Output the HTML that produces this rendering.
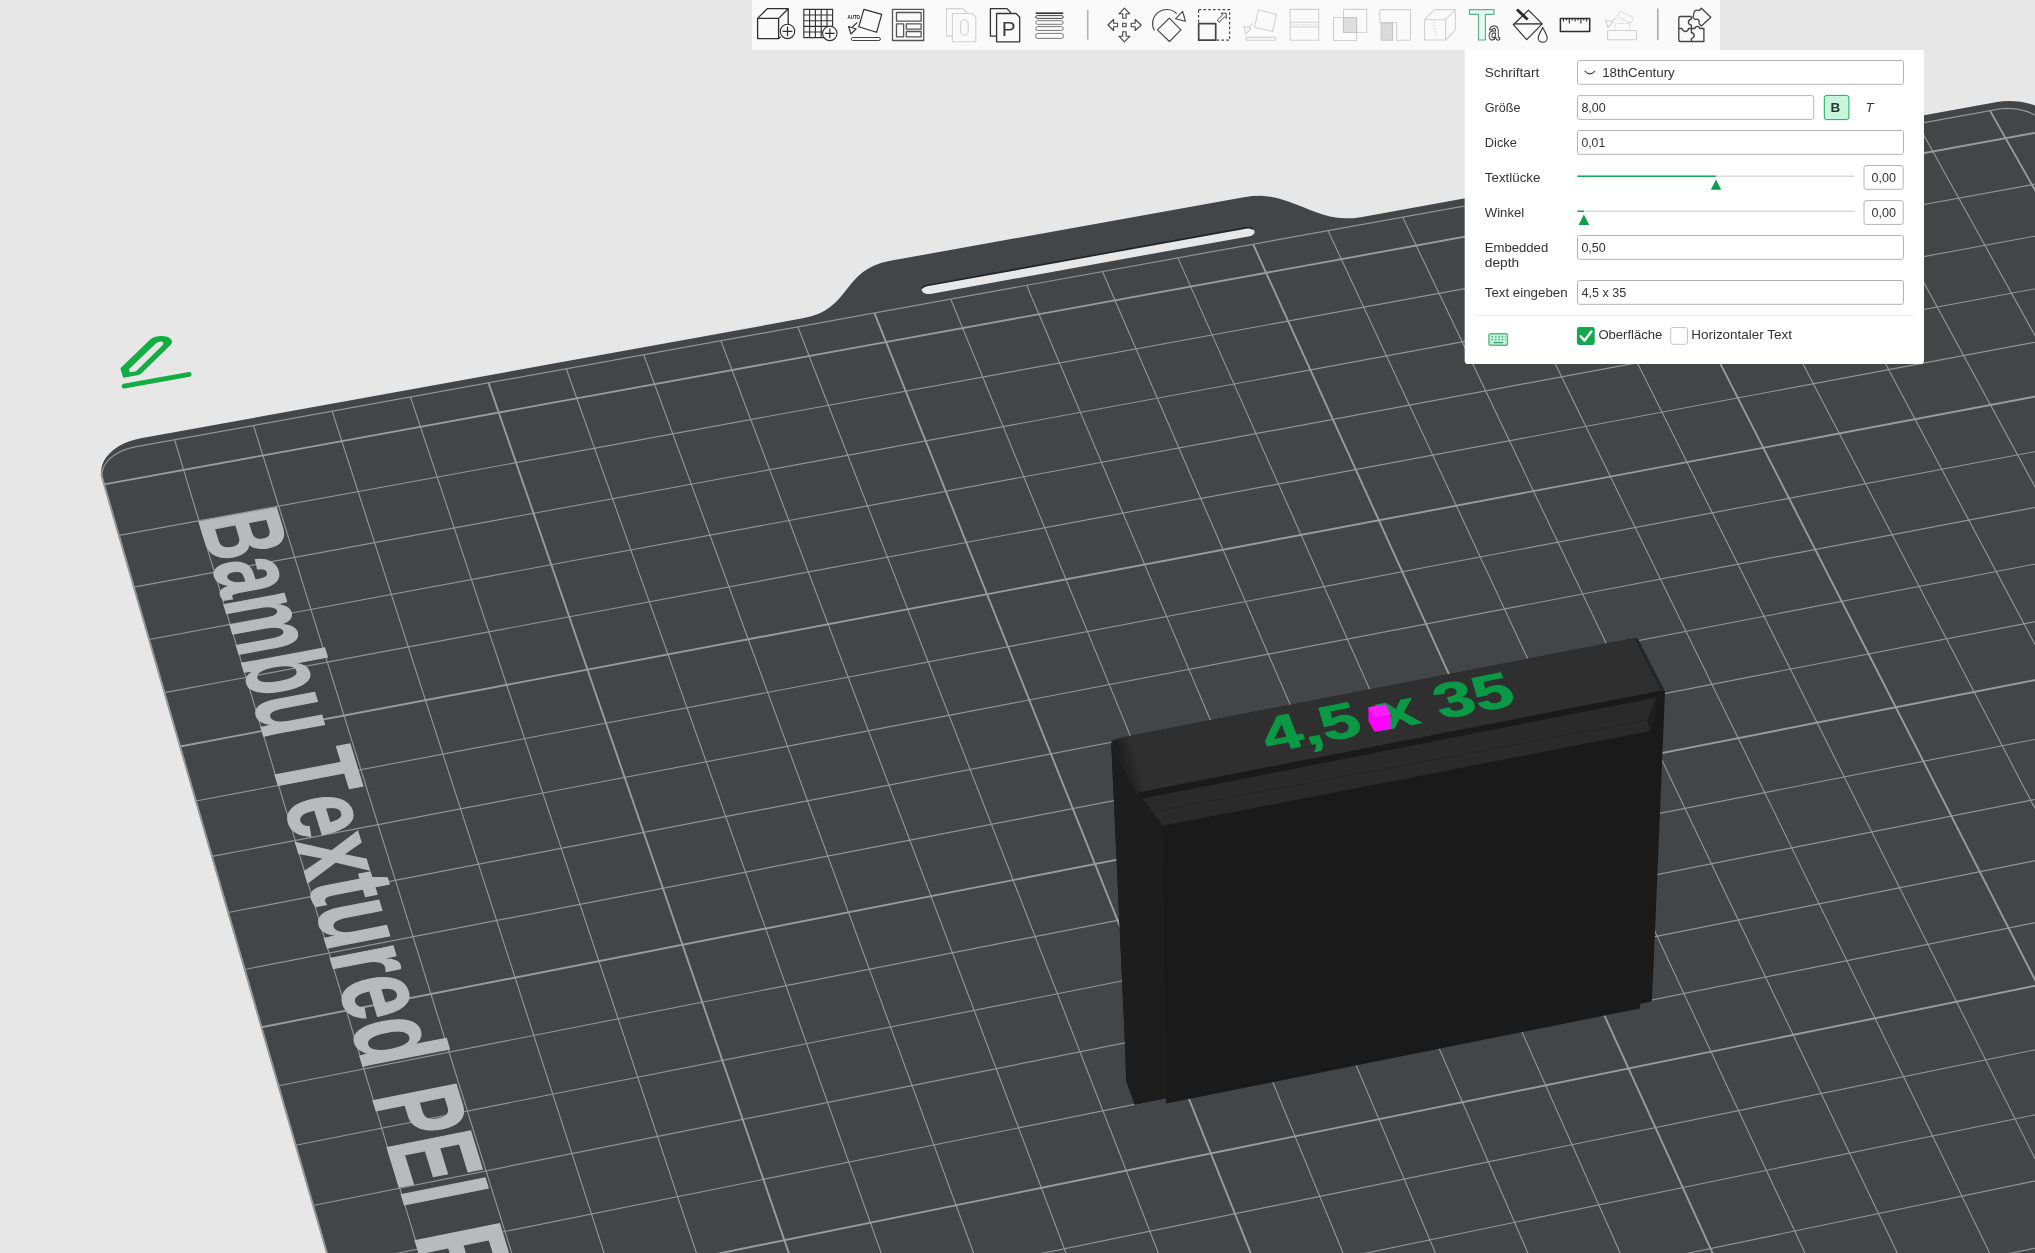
<!DOCTYPE html>
<html><head><meta charset="utf-8"><title>Bambu Studio</title>
<style>html,body{margin:0;padding:0;background:#e7e7e7;overflow:hidden}body{width:2035px;height:1253px;position:relative}svg{position:absolute;left:0;top:0;display:block;will-change:transform}text{white-space:pre}</style>
</head><body>
<svg width="2035" height="1253" viewBox="0 0 2035 1253">
<rect width="2035" height="1253" fill="#e7e7e7"/>
<path d="M102 477.09 L101.26 473.05 L101.35 468.95 L102.27 464.83 L103.99 460.79 L106.5 456.88 L109.74 453.17 L113.66 449.72 L118.2 446.59 L123.26 443.84 L128.78 441.51 L134.64 439.64 L140.77 438.26 L802.71 318.37 L811.35 316.33 L818.74 313.66 L825.05 310.45 L830.44 306.79 L835.12 302.77 L839.25 298.49 L843.02 294.03 L846.6 289.48 L850.18 284.94 L853.94 280.5 L858.05 276.24 L862.69 272.26 L868.04 268.63 L874.29 265.46 L881.6 262.83 L890.16 260.82 L1243.76 197.13 L1252.54 196.01 L1260.76 195.84 L1268.5 196.47 L1275.84 197.78 L1282.87 199.63 L1289.66 201.89 L1296.3 204.41 L1302.87 207.08 L1309.44 209.74 L1316.09 212.28 L1322.91 214.54 L1329.96 216.4 L1337.34 217.71 L1345.11 218.35 L1353.35 218.17 L1362.14 217.05 L1997.08 102.05 L2002.87 101.26 L2008.83 100.95 L2014.85 101.13 L2020.84 101.8 L2026.69 102.93 L2032.3 104.53 L2037.59 106.55 L2042.45 108.96 L2046.8 111.73 L2050.58 114.81 L2053.72 118.14 L2056.15 121.67 L2828.63 1467.16 L2831.11 1472.32 L2832.68 1477.59 L2833.32 1482.87 L2833.01 1488.09 L2831.76 1493.14 L2829.59 1497.94 L2826.53 1502.41 L2822.64 1506.47 L2817.98 1510.05 L2812.63 1513.08 L2806.69 1515.52 L2800.25 1517.32 L604.66 2002.56 L597.15 2003.82 L589.55 2004.31 L581.98 2004.02 L574.58 2002.96 L567.48 2001.14 L560.8 1998.6 L554.66 1995.38 L549.16 1991.54 L544.39 1987.15 L540.45 1982.27 L537.38 1977.01 L535.25 1971.44Z" fill="#444547"/>
<path d="M930.38 293.95 L928.6 294.12 L926.82 293.99 L925.16 293.57 L923.75 292.89 L922.67 292 L922 290.95 L921.78 289.82 L922.03 288.68 L922.73 287.62 L923.84 286.7 L925.27 285.99 L926.94 285.54 L1245.85 227.86 L1247.61 227.69 L1249.37 227.82 L1251.03 228.23 L1252.46 228.9 L1253.58 229.78 L1254.29 230.81 L1254.55 231.92 L1254.35 233.04 L1253.7 234.09 L1252.65 234.99 L1251.25 235.69 L1249.62 236.14Z" fill="#e7e7e7"/>
<path d="M922.79 287.64 L922.73 287.62 L923.53 286.91 L924.52 286.32 L925.67 285.85 L926.94 285.54 L1245.85 227.86 L1247.61 227.69 L1249.37 227.82 L1251.03 228.23 L1252.46 228.9" fill="none" stroke="#232324" stroke-width="1.6" stroke-linecap="round"/>
<path d="M174.58 439.78L639.12 1983.31 M253.51 425.47L733.08 1962.57 M332.14 411.22L826.61 1941.93 M410.48 397.02L919.72 1921.38 M566.27 368.77L1104.68 1880.55 M643.73 354.73L1196.54 1860.28 M720.9 340.74L1287.98 1840.09 M797.78 326.8L1379.01 1820 M950.68 299.08L1559.86 1780.08 M1026.71 285.29L1649.68 1760.26 M1102.46 271.56L1739.1 1740.52 M1177.92 257.88L1828.13 1720.87 M1328.02 230.66L2005 1681.83 M1402.65 217.13L2092.85 1662.44 M1477.01 203.65L2180.32 1643.13 M1551.1 190.22L2267.4 1623.91 M1698.47 163.5L2440.43 1585.72 M1771.75 150.22L2526.38 1566.75 M1844.76 136.98L2611.95 1547.86 M1917.51 123.79L2697.16 1529.05 M118.91 535.43L2075.65 176.66 M133.9 587.11L2102.52 223.61 M149.09 639.51L2129.75 271.16 M164.48 692.62L2157.33 319.34 M195.92 801.05L2213.57 417.59 M211.97 856.4L2242.26 467.7 M228.24 912.53L2271.33 518.48 M244.75 969.46L2300.79 569.95 M278.47 1085.78L2360.92 674.99 M295.7 1145.2L2391.61 728.59 M313.18 1205.48L2422.72 782.93 M330.91 1266.66L2454.27 838.04 M367.18 1391.74L2518.69 950.58 M385.72 1455.7L2551.6 1008.06 M404.55 1520.62L2584.97 1066.36 M423.66 1586.53L2618.83 1125.51 M462.76 1721.42L2688.04 1246.39 M482.78 1790.45L2723.41 1308.18 M503.1 1860.56L2759.3 1370.88 M523.75 1931.78L2795.74 1434.53" fill="none" stroke="#939495" stroke-width="1.15"/>
<path d="M101.19 474.31L544.73 2004.15 M488.52 382.87L1012.41 1900.92 M874.37 312.91L1469.64 1800 M1253.11 244.25L1916.76 1701.31 M1624.92 176.84L2354.11 1604.77 M1989.99 110.65L2781.99 1510.33 M104.12 484.42L2049.12 130.31 M180.09 746.46L2185.27 368.14 M261.49 1027.2L2330.65 622.11 M348.91 1328.74L2486.25 893.92 M443.06 1653.46L2653.18 1185.51 M544.73 2004.15L2832.72 1499.13" fill="none" stroke="#9a9b9c" stroke-width="1.9"/>
<path d="M102.66 479.36 L102.04 476 L102.11 472.57 L102.88 469.14 L104.32 465.77 L106.41 462.5 L109.11 459.41 L112.39 456.53 L116.17 453.92 L120.39 451.62 L124.99 449.67 L129.89 448.11 L135 446.96 L1997.23 109.34 L2002.06 108.68 L2007.03 108.42 L2012.05 108.57 L2017.05 109.12 L2021.93 110.08 L2026.61 111.41 L2031.01 113.09 L2035.07 115.11 L2038.7 117.42 L2041.84 119.99 L2044.45 122.77 L2046.48 125.71 L2814.16 1466.71 L2816.21 1471.01 L2817.51 1475.39 L2818.04 1479.79 L2817.77 1484.13 L2816.73 1488.34 L2814.91 1492.33 L2812.36 1496.05 L2809.11 1499.43 L2805.23 1502.41 L2800.77 1504.93 L2795.82 1506.96 L2790.46 1508.46 L591.98 1993.72 L585.73 1994.77 L579.4 1995.17 L573.1 1994.93 L566.94 1994.05 L561.03 1992.54 L555.47 1990.43 L550.36 1987.75 L545.78 1984.55 L541.81 1980.9 L538.53 1976.84 L535.97 1972.46 L534.2 1967.82Z" fill="none" stroke="#939495" stroke-width="1.2"/>
<g font-family="Liberation Sans, sans-serif" font-weight="bold" font-size="13.97" fill="#b9babc" stroke="#b9babc" stroke-width="0.22" stroke-linejoin="miter"><text transform="matrix(1.41 4.6 -7.99 1.47 197.88 517.52)">B</text><text transform="matrix(1.42 4.65 -8.03 1.49 211.9 563.99)">a</text><text transform="matrix(1.44 4.7 -8.08 1.5 222.71 600.1)">m</text><text transform="matrix(1.46 4.76 -8.13 1.52 240.38 658.67)">b</text><text transform="matrix(1.48 4.81 -8.17 1.54 252.64 699.39)">u</text><text transform="matrix(1.57 5.12 -8.23 1.56 270.35 758.28)">T</text><text transform="matrix(1.59 5.18 -8.27 1.58 283.54 802.06)">e</text><text transform="matrix(1.6 5.23 -8.31 1.6 295.66 842.34)">x</text><text transform="matrix(1.62 5.27 -8.34 1.61 307.96 883.05)">t</text><text transform="matrix(1.63 5.32 -8.37 1.62 315.29 907.59)">u</text><text transform="matrix(1.64 5.37 -8.41 1.64 329.02 953.07)">r</text><text transform="matrix(1.66 5.41 -8.45 1.65 337.78 982.28)">e</text><text transform="matrix(1.68 5.47 -8.49 1.67 350.45 1024.41)">d</text><text transform="matrix(1.53 4.99 -8.56 1.7 372.02 1096.08)">P</text><text transform="matrix(1.55 5.05 -8.61 1.72 386.05 1142.7)">E</text><text transform="matrix(1.56 5.09 -8.64 1.73 400.32 1189.87)">I</text><text transform="matrix(1.96 6.4 -8.7 1.76 413.71 1234.74)">P</text><text transform="matrix(1.98 6.47 -8.74 1.78 431.81 1294.55)">l</text><text transform="matrix(2 6.52 -8.78 1.79 439.3 1319.66)">a</text><text transform="matrix(2.02 6.59 -8.82 1.81 454.64 1370.47)">t</text></g>
<defs>
<linearGradient id="tl" gradientUnits="userSpaceOnUse" x1="1120" y1="766" x2="1138" y2="761"><stop offset="0" stop-color="#1c1c1d"/><stop offset="1" stop-color="#2f2f30"/></linearGradient>
</defs>
<path d="M1111.6 742.6Q1112 739.6 1115.5 738.7L1635.5 637.9Q1637 637.6 1637.8 639L1665 692L1653.8 960L1651.8 1001.3L1640 1004L1640 1008.4L1166.2 1103.5L1166.2 1098.5L1134.8 1104.7L1126.3 1081.3L1124.8 1040L1111.3 744Z" fill="#1a1a1b"/>
<path d="M1111.3 744L1136.4 792.7L1163 826L1166.2 1098.5L1134.8 1104.7L1126.3 1081.3L1124.8 1040Z" fill="#1d1d1e"/>
<path d="M1111.6 742.6Q1112 739.6 1115.5 738.7L1635.5 637.9Q1637 637.6 1637.8 639L1665 692L1663.3 690.3L1136.4 792.7L1111.6 743Z" fill="#2f2f30"/>
<path d="M1112 741.5L1136.4 792.7L1156 788.8L1131 737Z" fill="url(#tl)"/>
<path d="M1637.8 639L1665 692L1661 690.8L1634.5 639Z" fill="#252526"/>
<path d="M1142.3 798.6L1656.3 697.6L1647.4 720.2L1650.4 731.1L1162.9 825.7Z" fill="#2a2a2b"/>
<path d="M1154 811.5L1647.4 720.2" stroke="#232324" stroke-width="0.8" fill="none"/>
<path d="M1656.3 697.6L1647.4 720.2L1650.4 731.1L1660 700Z" fill="#1d1d1e"/>
<g font-family="Liberation Sans, sans-serif" font-weight="bold" font-size="100" fill="#0a9a46" stroke="#0a9a46" stroke-width="1.8" stroke-linejoin="round">
<text transform="matrix(0.688 -0.134 0.1825 0.4715 1269 752.7)">4,5 x 35</text>
</g>
<path d="M1368.5 707.3L1385.4 704.5L1390.5 714.4L1390.5 728.9L1374.4 731.7L1368.5 720.7Z" fill="#ff00ff"/>
<path d="M1368.5 707.3L1385.4 704.5L1390.5 714.4L1374.4 717.5Z" fill="#fb1efb"/>

<path fill="#12ae41" fill-rule="evenodd" d="M120.4 368.3L123 377.2Q123.6 378 124.8 377.6L138.8 374.9Q140 374.7 141 373.7L170.5 345Q172.6 342.6 171.8 340.4Q169.5 336 161 336Q154 336 150.2 339.6ZM128.9 369.3L155.8 343.5Q158.5 341.3 161.5 341.6Q164.3 342.5 162.8 345L136.6 370.8Q136 371.3 135.2 371.4L130.4 372.2Q129.8 372.2 129.6 371.6Z"/>
<path d="M124 386.1L189.2 374.4" stroke="#12ae41" stroke-width="4.7" stroke-linecap="round" fill="none"/>

<rect x="752" y="0" width="968" height="50" fill="#fafafa"/>
<g fill="none" stroke="#2e2e2e" stroke-width="1.3" stroke-linejoin="round">
<!-- 1 cube plus -->
<path d="M757.6 18.4H778.6V38.6H757.6ZM757.6 18.4L767.2 8.7H788.2L778.6 18.4M788.2 8.7V24M778.6 38.6L780.6 36.6" stroke-width="1.3"/>
<circle cx="787.5" cy="31.4" r="7.2" fill="#fafafa" stroke-width="1.1"/><path d="M782.6 31.4H792.4M787.5 26.5V36.3" stroke-width="1.2"/>
<!-- 2 grid plus -->
<path d="M803.8 9.4H832.6V37.6H803.8ZM809.6 9.4V37.6M815.4 9.4V37.6M821.2 9.4V37.6M827 9.4V37.6M803.8 15V37.6M803.8 15H832.6M803.8 20.7H832.6M803.8 26.3H832.6M803.8 32H832.6" stroke-width="1.15" stroke="#333"/>
<circle cx="829.8" cy="33.4" r="7.2" fill="#fafafa" stroke-width="1.1"/><path d="M824.9 33.4H834.7M829.8 28.5V38.3" stroke-width="1.2"/>
<!-- 3 auto orient -->
<path d="M863.9 9.3L881.7 14.4L876.6 32.3L858.7 26.8Z" stroke-width="1.2"/>
<path d="M857.3 22.4L852.5 27" stroke-width="1.1"/><path d="M848.6 26.5L856.2 28.9L850.9 34Z" stroke-width="1.1"/>
<rect x="851.2" y="37.5" width="29.2" height="3" rx="1.5" stroke-width="1" stroke="#444"/>
<!-- 4 layout -->
<g stroke="#555" stroke-width="1.3"><rect x="892.5" y="9.4" width="31.2" height="31.1"/><rect x="896.5" y="12.5" width="24.6" height="8.7"/><rect x="896.5" y="23.8" width="7.1" height="13.1"/><rect x="906.3" y="23.8" width="14.8" height="5.4"/><rect x="906.3" y="31.5" width="14.8" height="5.4"/></g>
<!-- 5 copy disabled -->
<g stroke="#d2d2d2" stroke-width="1.1"><path d="M952.3 36.1H946.5V8.6H963L966.5 12.2V13.4"/><path d="M952.4 13.5H972.2L975.8 17.2V41.8H952.4Z" fill="#fafafa"/><rect x="960.6" y="19.8" width="7.6" height="15.4" rx="3.8"/></g>
<!-- 6 paste -->
<g stroke="#333" stroke-width="1.3"><path d="M996.5 36.1H990.4V8.6H1007L1010.5 12.2V13.4"/><path d="M996.6 13.5H1016.1L1019.7 17.2V41.8H996.6Z" fill="#fafafa"/></g>
<!-- 7 layers -->
<path d="M1035.8 13.2H1063.2" stroke="#333" stroke-width="1.7"/>
<g stroke="#777" stroke-width="1"><rect x="1035.8" y="15.6" width="27.4" height="2.8" rx="1.4" stroke="#444"/><rect x="1035.8" y="20.7" width="27.4" height="3.6" rx="1.6"/><rect x="1035.8" y="26.6" width="27.4" height="3.8" rx="1.6"/><rect x="1035.8" y="33.4" width="27.4" height="5" rx="1.6"/></g>
<path d="M1087.7 9.8V39.8" stroke="#b4b4b4" stroke-width="1.6"/>
<!-- 8 move -->
<g stroke="#444" stroke-width="1.1"><path d="M1122.7 18.2V13.8H1118.9L1124.4 8.2L1129.9 13.8H1126.1V18.2Z"/><path d="M1122.7 31.8V36.2H1118.9L1124.4 41.8L1129.9 36.2H1126.1V31.8Z"/><path d="M1117.6 23.3H1113.6V19.5L1108 25L1113.6 30.5V26.7H1117.6Z"/><path d="M1131.2 23.3H1135.2V19.5L1141.2 25L1135.2 30.5V26.7H1131.2Z"/><rect x="1122.7" y="23.3" width="3.4" height="3.4"/></g>
<!-- 9 rotate -->
<g stroke="#444" stroke-width="1.15"><path d="M1169.3 18.1L1180.9 29.9L1169.5 41.5L1157.4 29.9Z"/><path d="M1154.3 30.4A14.15 14.15 0 0 1 1176.6 13.5"/><path d="M1182.7 11.4L1185.3 21.2L1175.5 18.8Z"/></g>
<!-- 10 scale -->
<g stroke="#444"><rect x="1198.6" y="9.6" width="31" height="30.6" stroke-width="1.2" stroke-dasharray="2.6 2.2"/><rect x="1198.7" y="23.6" width="17" height="16.6" stroke-width="1.7" fill="#fafafa"/><path d="M1217.2 20.2L1222.7 14.8L1221 13.2H1226.2V18.4L1224.6 16.8L1219.2 22.2Z" stroke-width="1"/></g>
<!-- 11 lay on face disabled -->
<g stroke="#d2d2d2" stroke-width="1.1"><path d="M1258.6 9.8L1276.6 14.4L1272.5 31.5L1254.4 27.3Z"/><path d="M1252.8 23.5L1248.4 27.6"/><path d="M1243.8 26.2L1251 28.4L1246 33.8Z"/><rect x="1246.2" y="37.4" width="29.4" height="2.8"/></g>
<!-- 12 cut disabled -->
<g stroke="#d2d2d2" stroke-width="1.1"><rect x="1290.2" y="9.4" width="28.5" height="30.8"/><path d="M1290.2 22.2H1318.7M1290.2 27H1318.7"/><path d="M1291 24.7H1318" stroke-dasharray="1.4 1.4"/></g>
<!-- 13 boolean disabled -->
<g stroke="#d2d2d2" stroke-width="1.1"><rect x="1343.5" y="9.4" width="23.2" height="23.1"/><rect x="1333.5" y="17.5" width="23.1" height="23"/><rect x="1343.5" y="17.5" width="13.1" height="15" fill="#dedede" stroke="#c6c6c6"/></g>
<!-- 14 support disabled -->
<g stroke="#d2d2d2" stroke-width="1.1"><path d="M1379.7 9.6H1410.5V40.2H1396.6V22.5H1379.7Z"/><rect x="1381.2" y="23" width="11.3" height="17.2" fill="#dadada" stroke="#c6c6c6"/></g>
<!-- 15 seam disabled -->
<g stroke="#d2d2d2" stroke-width="1.1"><path d="M1424.6 19.7H1445.6V40H1424.6ZM1424.6 19.7L1434.3 9.6H1455.4L1445.6 19.7M1455.4 9.6V29.9L1445.6 40"/><path d="M1433.5 22L1436 36" stroke-dasharray="1.3 1.8" stroke="#ccc"/></g>
<!-- 16 text -->
<path d="M1469.5 9.6H1494V14.4H1485.4V40H1478.5V14.4H1469.5Z" stroke="#58b58b" stroke-width="1.2" fill="#ebfaf3"/>
<!-- 17 bucket -->
<g stroke="#333" stroke-width="1.2"><path d="M1528.5 10.2L1542.2 23.9L1526.7 39.6L1513.3 24.7Z"/><path d="M1514 23.9H1542.2" stroke-width="1.4"/><path d="M1517 9.4L1527.7 19.6" stroke-width="2.8" stroke="#2a2a2a"/><path d="M1542.7 27.6C1545.5 33 1547.2 35.4 1547.2 38A4.5 4.3 0 0 1 1538.2 38C1538.2 35.4 1540 33 1542.7 27.6Z" stroke-width="1.1"/></g>
<!-- 18 ruler -->
<g stroke="#2e2e2e"><rect x="1560.4" y="18.5" width="29.3" height="13" stroke-width="1.5"/><path d="M1563.5 18.5V21.5M1566.4 18.5V20.6M1569.3 18.5V23.6M1572.2 18.5V20.6M1575.1 18.5V21.5M1578 18.5V20.6M1580.9 18.5V23.6M1583.8 18.5V20.6M1586.6 18.5V21.5" stroke-width="1.1"/></g>
<!-- 19 assembly disabled -->
<g stroke="#d2d2d2" stroke-width="1.1"><rect x="1607.6" y="30.5" width="29" height="9.2"/><path d="M1620 11L1633.6 17.5L1631 23L1617.4 16.5Z" stroke-dasharray="1.6 1.2"/><path d="M1615.5 18.5L1611.5 21.5"/><path d="M1605.6 20.4L1613 21.8L1608 27.6Z"/><path d="M1615 30V23.5H1629.6V30" stroke-dasharray="1.4 1.4"/></g>
<path d="M1657.8 8.6V40.2" stroke="#b0b0b0" stroke-width="1.7"/>
<!-- 20 puzzle -->
<g stroke="#444" stroke-width="1.35"><path d="M1691.4 16.5H1680.2Q1678.8 16.5 1678.8 18V40Q1678.8 41.5 1680.2 41.5H1703.9V28.5H1699.8C1699.3 25.6 1695.3 25.6 1694.8 28.5H1691.4"/><path d="M1678.8 28.5H1682C1683.5 32.5 1687.5 32.5 1688.6 28.5H1691.4"/><path d="M1691.4 16.5V19C1687.4 20.2 1687.4 24.2 1691.4 25.2V32.5C1695.2 33.6 1695.2 37.6 1691.4 38.6V41.5"/><path d="M1701.4 8.2L1710.8 17.3L1701.4 26L1699 23.6C1700.3 20.3 1697.5 18.2 1695.3 19.6L1692.9 17.2C1694.6 14.6 1692.8 12 1695.2 10.6C1697.5 9.3 1699 11.4 1699.3 10.2Z" stroke-width="1.3"/></g>
</g>
<g font-family="Liberation Sans, sans-serif">
<text transform="translate(847.5 19) scale(0.385 0.5)" font-size="11.6" font-weight="bold" fill="#222">AUTO</text>
<text x="1001.8" y="36.2" font-size="20.8" fill="#3c3c3c">P</text>
<text transform="translate(1488.6 40.4) scale(0.8 1)" font-size="25" font-weight="bold" fill="#fafafa" stroke="#333" stroke-width="1.1">a</text>
</g>

<path d="M1464.7 50H1924V360.4Q1924 364 1920.4 364H1468.3Q1464.7 364 1464.7 360.4Z" fill="#fff"/>
<g fill="#fff" stroke="#b4b4b4" stroke-width="1">
<rect x="1577.5" y="60.5" width="326" height="23.8" rx="2"/>
<rect x="1577.5" y="95.6" width="236.2" height="23.8" rx="2"/>
<rect x="1577.5" y="130.5" width="326" height="23.8" rx="2"/>
<rect x="1864" y="165.5" width="39.2" height="23.8" rx="2"/>
<rect x="1864" y="200.6" width="39.2" height="23.8" rx="2"/>
<rect x="1577.5" y="235.5" width="326" height="23.8" rx="2"/>
<rect x="1577.5" y="280.5" width="326" height="23.8" rx="2"/>
</g>
<rect x="1824.3" y="95.4" width="24.6" height="24.2" rx="2.4" fill="#c9f5dc" stroke="#1ea85a" stroke-width="1"/>
<path d="M1475 315.4H1913.6" stroke="#ececec" stroke-width="1"/>
<path d="M1577.4 176.3H1854.5" stroke="#d9d9d9" stroke-width="1.6"/>
<path d="M1577.4 176.3H1716" stroke="#1aab55" stroke-width="1.6"/>
<path d="M1716 179.6L1721.2 189.8H1710.8Z" fill="#0e9f4a"/>
<path d="M1577.4 211.3H1854.5" stroke="#d9d9d9" stroke-width="1.6"/>
<path d="M1577.4 211.3H1584" stroke="#1aab55" stroke-width="1.6"/>
<path d="M1583.9 214.5L1589.2 225H1578.6Z" fill="#0e9f4a"/>
<path d="M1584.9 71.2Q1589.9 76.6 1594.9 71.2" fill="none" stroke="#444" stroke-width="1.1" stroke-linecap="round" stroke-linejoin="round"/>
<!-- checkboxes -->
<rect x="1576.9" y="327.1" width="17.8" height="17.8" rx="2.4" fill="#12a84c"/>
<path d="M1580.6 336.2L1584.5 340.6L1591.4 331.6" fill="none" stroke="#fff" stroke-width="2.4" stroke-linecap="round" stroke-linejoin="round"/>
<rect x="1670.7" y="327.5" width="16.8" height="16.8" rx="2.2" fill="#fff" stroke="#c4c4c4" stroke-width="1"/>
<!-- keyboard icon -->
<rect x="1488.9" y="333.8" width="18.6" height="11.5" rx="1.8" stroke="#6cb08f" fill="#baf5d6" stroke-width="1.4"/>
<path d="M1491.6 336.8H1493M1495 336.8H1496.4M1498.4 336.8H1499.8M1501.8 336.8H1503.2M1505 336.8H1505.6M1491.6 339.6H1493M1495 339.6H1496.4M1498.4 339.6H1499.8M1501.8 339.6H1503.2M1505 339.6H1505.6M1493.6 342.6H1503" stroke="#3f9f6c" stroke-width="1.3" fill="none"/>
<g font-family="Liberation Sans, sans-serif" font-size="13.4" fill="#333">
<text x="1484.8" y="77.2" textLength="54.4" lengthAdjust="spacingAndGlyphs">Schriftart</text>
<text x="1484.8" y="112" textLength="35.6" lengthAdjust="spacingAndGlyphs">Größe</text>
<text x="1484.8" y="147.2" textLength="32" lengthAdjust="spacingAndGlyphs">Dicke</text>
<text x="1484.8" y="182" textLength="55.6" lengthAdjust="spacingAndGlyphs">Textlücke</text>
<text x="1484.8" y="217.2" textLength="39.4" lengthAdjust="spacingAndGlyphs">Winkel</text>
<text x="1484.8" y="252.2" textLength="63.4" lengthAdjust="spacingAndGlyphs">Embedded</text>
<text x="1484.8" y="267.2" textLength="34.4" lengthAdjust="spacingAndGlyphs">depth</text>
<text x="1484.8" y="297" textLength="82.8" lengthAdjust="spacingAndGlyphs">Text eingeben</text>
<text x="1602.2" y="77.2" textLength="72.6" lengthAdjust="spacingAndGlyphs">18thCentury</text>
<text x="1581.4" y="112" textLength="24.4" lengthAdjust="spacingAndGlyphs">8,00</text>
<text x="1581.4" y="147.2" textLength="23.8" lengthAdjust="spacingAndGlyphs">0,01</text>
<text x="1871.6" y="182" textLength="24.4" lengthAdjust="spacingAndGlyphs">0,00</text>
<text x="1871.6" y="217.2" textLength="24.4" lengthAdjust="spacingAndGlyphs">0,00</text>
<text x="1581.4" y="252.2" textLength="24.4" lengthAdjust="spacingAndGlyphs">0,50</text>
<text x="1581.4" y="297" textLength="44.8" lengthAdjust="spacingAndGlyphs">4,5 x 35</text>
<text x="1598.4" y="338.9" textLength="64" lengthAdjust="spacingAndGlyphs">Oberfläche</text>
<text x="1691.2" y="338.9" textLength="100.8" lengthAdjust="spacingAndGlyphs">Horizontaler Text</text>
<text x="1830.6" y="112.4" font-weight="bold" font-size="13.5" fill="#1f3d2c">B</text>
<text x="1865.6" y="112.4" font-style="italic" font-size="13.5" fill="#3a3a3a">T</text>
</g>

</svg>
</body></html>
